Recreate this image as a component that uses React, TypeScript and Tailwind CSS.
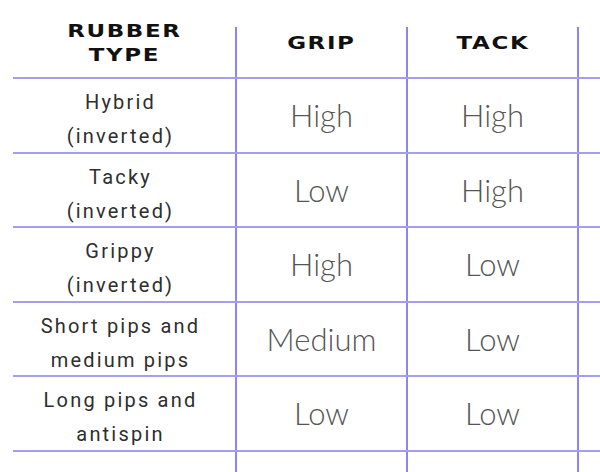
import React from "react";

const rows: [string[], string, string][] = [
  [["Hybrid", "(inverted)"], "High", "High"],
  [["Tacky", "(inverted)"], "Low", "High"],
  [["Grippy", "(inverted)"], "High", "Low"],
  [["Short pips and", "medium pips"], "Medium", "Low"],
  [["Long pips and", "antispin"], "Low", "Low"],
];

function Head({ lines }: { lines: string[] }) {
  return (
    <div className="flex flex-col items-center text-[17px] leading-[24px] font-bold tracking-[1.2px] text-[#111] scale-x-[1.35] [font-family:'DejaVu_Sans',sans-serif]">
      {lines.map((l) => (
        <span key={l}>{l}</span>
      ))}
    </div>
  );
}

export default function App() {
  return (
    <div className="h-[472px] w-[600px] overflow-hidden bg-white">
      <div className="ml-[13px] flex h-full flex-col">
        <div className="flex h-[79px] shrink-0 items-start border-b-2 border-[#a59df4]">
          <div className="flex w-[222px] justify-center pt-[19px]">
            <Head lines={["RUBBER", "TYPE"]} />
          </div>
          <div className="mt-[27px] flex w-[171px] justify-center self-stretch border-l-2 border-[#8f85f2] pt-[4px]">
            <Head lines={["GRIP"]} />
          </div>
          <div className="mt-[27px] flex w-[171px] justify-center self-stretch border-l-2 border-[#8f85f2] pt-[4px]">
            <Head lines={["TACK"]} />
          </div>
          <div className="mt-[27px] flex-1 self-stretch border-l-2 border-[#8f85f2]" />
        </div>
        {rows.map(([name, grip, tack], i) => (
          <div
            key={i}
            className="flex h-[74.5px] shrink-0 border-b-2 border-[#a59df4]"
          >
            <div className="flex w-[222px] flex-col items-center justify-center pt-[8px] pr-[7px] text-center text-[20px] leading-[34px] tracking-[2.2px] text-[#2e2e2e] [font-family:Roboto,sans-serif]">
              {name.map((n) => (
                <span key={n}>{n}</span>
              ))}
            </div>
            <div className="flex w-[171px] items-center justify-center border-l-2 border-[#8f85f2] text-[31px] font-light text-[#555] [font-family:Lato,sans-serif]">
              {grip}
            </div>
            <div className="flex w-[171px] items-center justify-center border-l-2 border-[#8f85f2] text-[31px] font-light text-[#555] [font-family:Lato,sans-serif]">
              {tack}
            </div>
            <div className="flex-1 border-l-2 border-[#8f85f2]" />
          </div>
        ))}
        <div className="flex flex-1">
          <div className="w-[222px]" />
          <div className="w-[171px] border-l-2 border-[#8f85f2]" />
          <div className="w-[171px] border-l-2 border-[#8f85f2]" />
          <div className="flex-1 border-l-2 border-[#8f85f2]" />
        </div>
      </div>
    </div>
  );
}
